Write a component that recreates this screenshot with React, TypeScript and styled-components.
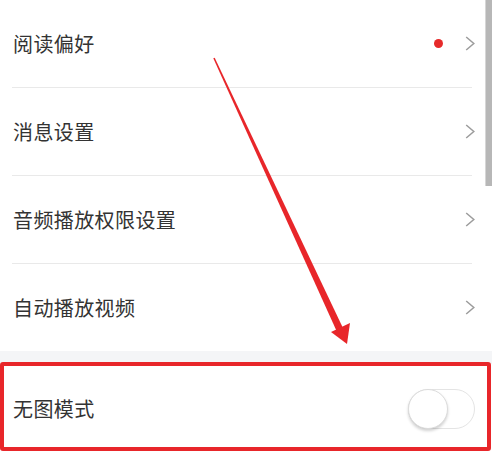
import React from 'react';
import styled, { createGlobalStyle } from 'styled-components';

const GlobalStyle = createGlobalStyle`
  html, body {
    margin: 0;
    padding: 0;
    background: #ffffff;
  }
  body {
    font-family: "Noto Sans CJK SC", "Noto Sans", sans-serif;
  }
`;

const Screen = styled.div`
  position: relative;
  width: 492px;
  height: 456px;
  overflow: hidden;
  background: #ffffff;
`;

const Group = styled.div`
  display: flex;
  flex-direction: column;
  background: #ffffff;
`;

const Row = styled.div<{ $divider?: boolean; $height?: number }>`
  display: flex;
  align-items: center;
  height: ${(p) => p.$height ?? 87}px;
  margin: 0 20px 0 12px;
  padding-left: 1px;
  box-sizing: border-box;
  border-bottom: ${(p) => (p.$divider ? '1px solid #e9e9e9' : 'none')};
`;

const Label = styled.span`
  flex: 1;
  font-size: 20px;
  color: #333333;
  letter-spacing: 0.4px;
`;

const Dot = styled.span`
  width: 9px;
  height: 9px;
  border-radius: 50%;
  background: #e62a2a;
  margin-right: 22px;
`;

const Chevron = styled.svg`
  width: 10px;
  height: 15px;
  margin-right: -3px;
`;

const Gap = styled.div`
  height: 13px;
  background: #f4f5f7;
`;

const Toggle = styled.div`
  position: relative;
  width: 67px;
  height: 40px;
  border-radius: 20px;
  border: 1px solid #e4e4e4;
  box-sizing: border-box;
  background: #ffffff;
  margin-right: -3px;
`;

const Knob = styled.div`
  position: absolute;
  left: -1px;
  top: -1px;
  width: 40px;
  height: 40px;
  border-radius: 50%;
  background: #ffffff;
  box-sizing: border-box;
  border: 1px solid #dcdcdc;
  box-shadow: 0 2px 3px rgba(0, 0, 0, 0.18);
`;

const Highlight = styled.div`
  position: absolute;
  left: 0;
  top: 362px;
  width: 491px;
  height: 89px;
  box-sizing: border-box;
  border: 4px solid #e8262a;
  border-radius: 3px;
  pointer-events: none;
`;

const Scrollbar = styled.div`
  position: absolute;
  right: 0;
  top: 0;
  width: 6px;
  height: 186px;
  background: #b7b7b7;
  border-left: 1px solid #d6d6d6;
`;

const Annotation = styled.svg`
  position: absolute;
  left: 0;
  top: 0;
  width: 492px;
  height: 456px;
  pointer-events: none;
`;

function Arrow() {
  return (
    <Chevron viewBox="0 0 10 15">
      <polyline points="1.2,1 8.8,7.5 1.2,14" fill="none" stroke="#9c9c9c" strokeWidth="1.5" />
    </Chevron>
  );
}

const items = [
  { label: '阅读偏好', dot: true },
  { label: '消息设置' },
  { label: '音频播放权限设置' },
  { label: '自动播放视频' },
];

export default function App() {
  return (
    <>
      <GlobalStyle />
      <Screen>
        <Group>
          {items.map((item, i) => (
            <Row key={item.label} $divider={i < items.length - 1} $height={i < items.length - 1 ? 88 : 87}>
              <Label>{item.label}</Label>
              {item.dot && <Dot />}
              <Arrow />
            </Row>
          ))}
        </Group>
        <Gap />
        <Group>
          <Row $height={89}>
            <Label>无图模式</Label>
            <Toggle>
              <Knob />
            </Toggle>
          </Row>
        </Group>
        <Scrollbar />
        <Highlight />
        <Annotation viewBox="0 0 492 456">
          <polygon points="213.3,58.3 214.7,57.7 343.2,328.5 336.8,331.5" fill="#e8262a" />
          <polygon points="331,332 350,323 347,344" fill="#e8262a" />
        </Annotation>
      </Screen>
    </>
  );
}
